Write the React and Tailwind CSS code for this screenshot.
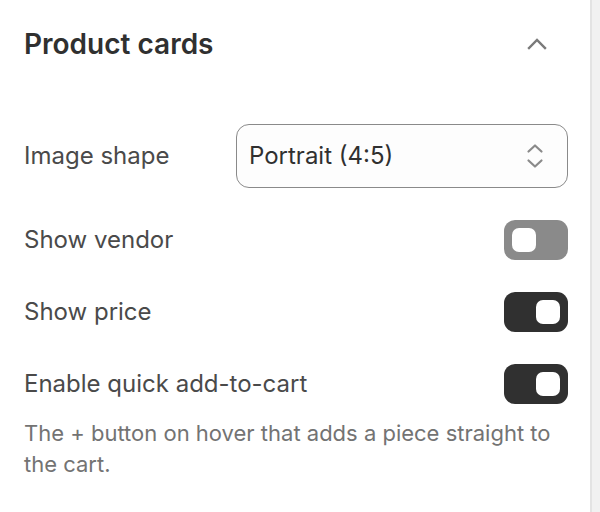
import React, { useState } from "react";

function Toggle({ on, onChange }) {
  return (
    <button
      type="button"
      onClick={() => onChange(!on)}
      className={`flex h-10 w-16 shrink-0 items-center rounded-[11px] px-2 ${on ? "justify-end bg-[#303030]" : "justify-start bg-[#8a8a8a]"}`}
    >
      <span className="size-6 rounded-[7px] bg-white" />
    </button>
  );
}

function ChevronUp() {
  return (
    <svg width="20" height="12" viewBox="0 0 20 12" fill="none">
      <path d="M2 10 L10 2 L18 10" stroke="#7a7a7a" strokeWidth="2.4" strokeLinecap="square" />
    </svg>
  );
}

function UpDown() {
  return (
    <svg width="18" height="26" viewBox="0 0 18 26" fill="none">
      <path d="M2.5 8.5 L9 2.5 L15.5 8.5" stroke="#8a8a8a" strokeWidth="2.2" strokeLinecap="round" strokeLinejoin="round" />
      <path d="M2.5 17.5 L9 23.5 L15.5 17.5" stroke="#8a8a8a" strokeWidth="2.2" strokeLinecap="round" strokeLinejoin="round" />
    </svg>
  );
}

export default function App() {
  const [vendor, setVendor] = useState(false);
  const [price, setPrice] = useState(true);
  const [quick, setQuick] = useState(true);

  return (
    <div className="flex h-[512px] w-[600px] bg-[#f1f1f1] font-['Inter',sans-serif]">
      <div className="h-full w-[592px] border-r-2 border-[#e3e3e3] bg-white">
        <div className="w-[568px] pl-6">
          <div className="flex h-[88px] items-center justify-between">
            <h2 className="text-[28px] font-semibold text-[#303030]">Product cards</h2>
            <button type="button" className="mr-[21px] flex items-center">
              <ChevronUp />
            </button>
          </div>

          <div className="mt-9 flex items-center justify-between">
            <span className="text-[24px] text-[#4a4a4a]">Image shape</span>
            <div className="flex h-16 w-[332px] items-center justify-between rounded-[13px] border border-[#8a8a8a] bg-[#fdfdfd] pl-3 pr-[23px]">
              <span className="text-[24px] text-[#303030]">Portrait (4:5)</span>
              <UpDown />
            </div>
          </div>

          <div className="mt-8 flex flex-col gap-8">
            <div className="flex items-center justify-between">
              <span className="text-[24px] text-[#4a4a4a]">Show vendor</span>
              <Toggle on={vendor} onChange={setVendor} />
            </div>
            <div className="flex items-center justify-between">
              <span className="text-[24px] text-[#4a4a4a]">Show price</span>
              <Toggle on={price} onChange={setPrice} />
            </div>
            <div>
              <div className="flex items-center justify-between">
                <span className="text-[24px] text-[#4a4a4a]">Enable quick add-to-cart</span>
                <Toggle on={quick} onChange={setQuick} />
              </div>
              <p className="mt-[14px] text-[22px] leading-[31px] text-[#737373]">
                The + button on hover that adds a piece straight to the cart.
              </p>
            </div>
          </div>
        </div>
      </div>
    </div>
  );
}
